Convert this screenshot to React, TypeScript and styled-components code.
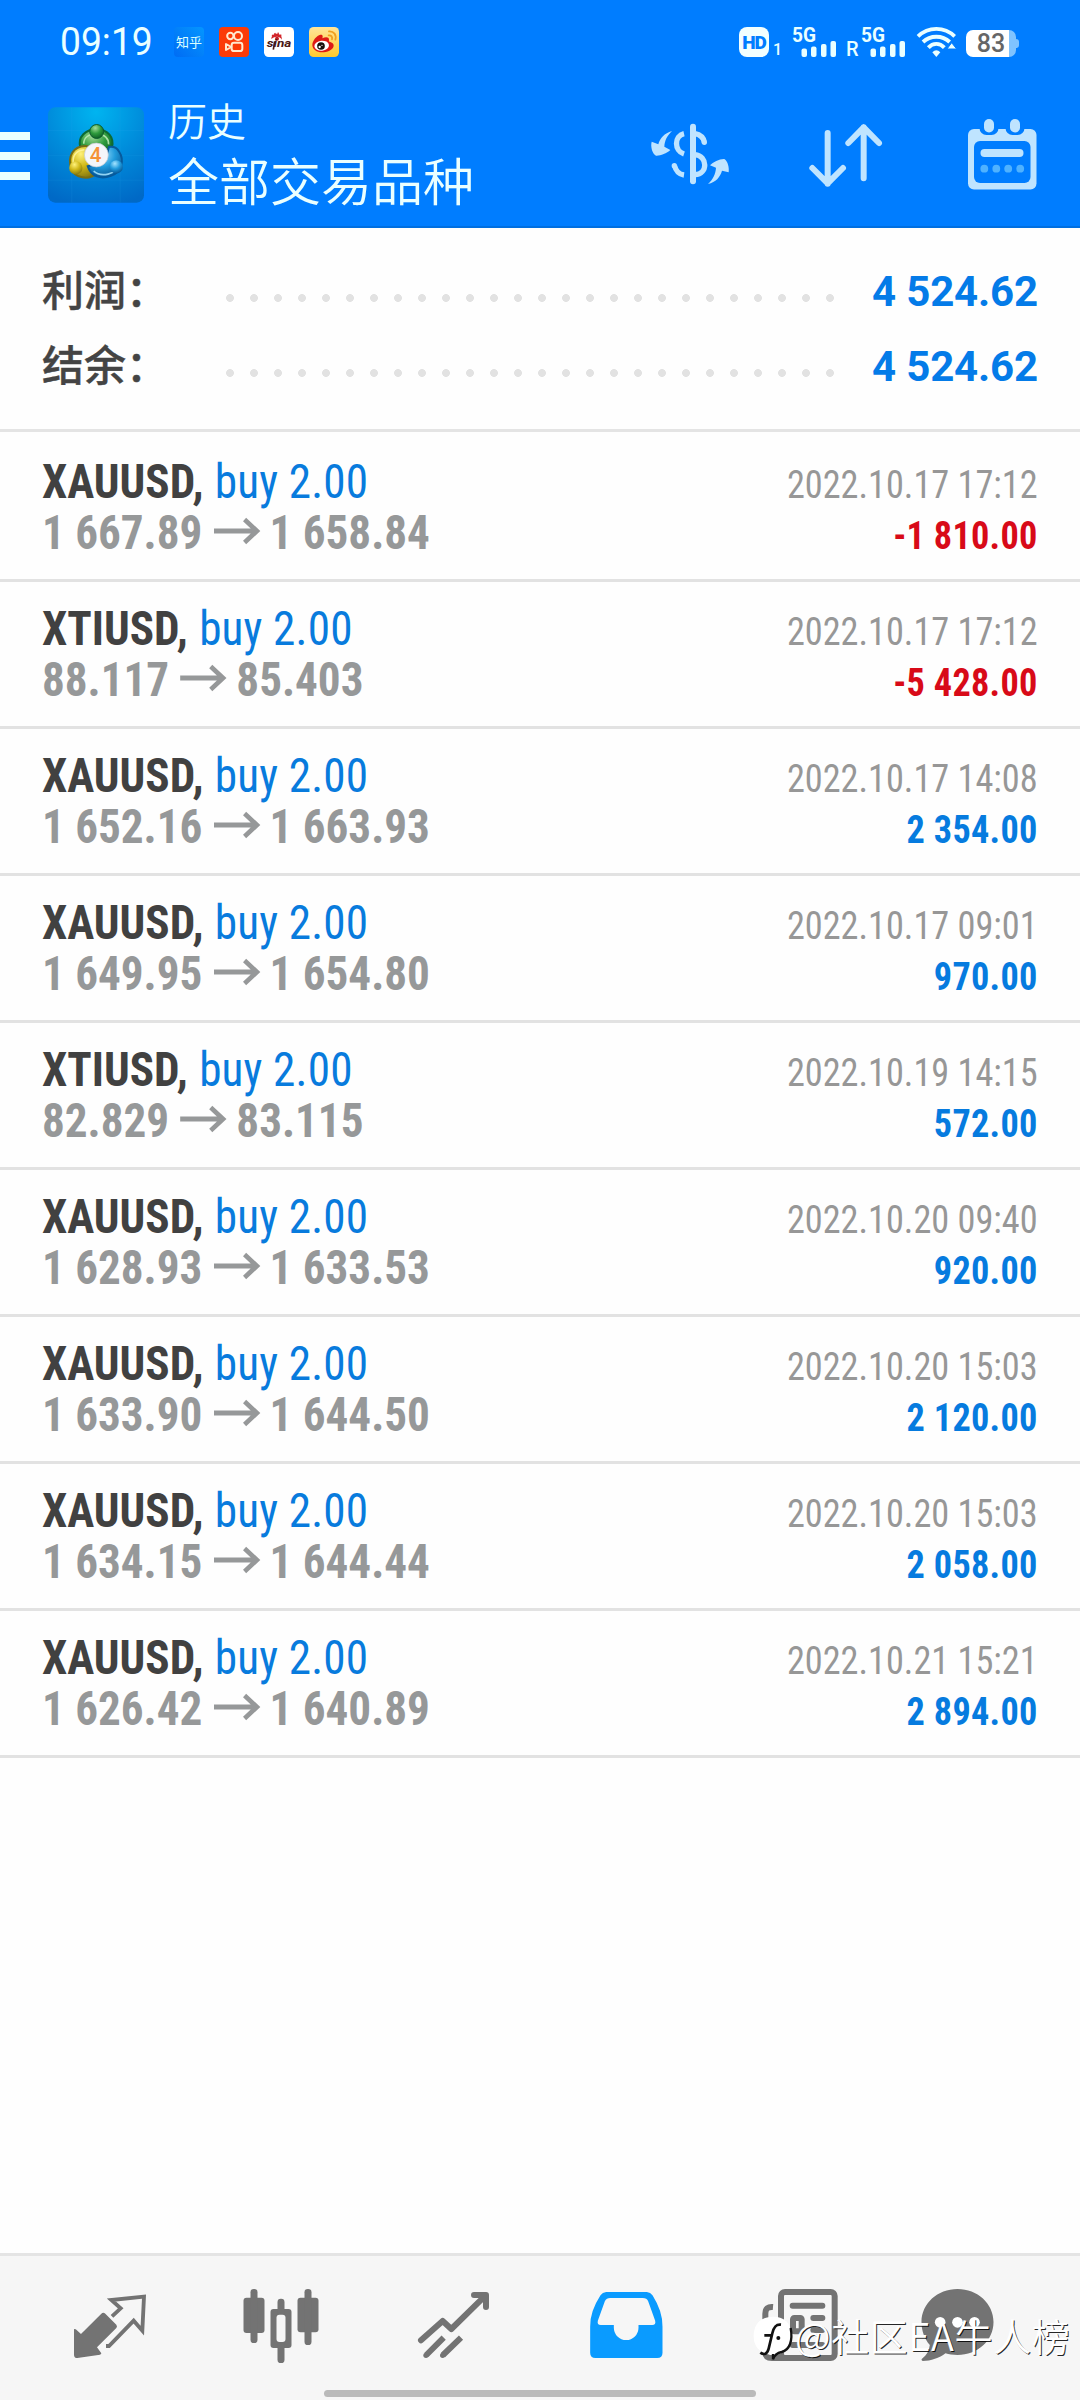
import React from "react";
import styled, { createGlobalStyle } from "styled-components";

const CONDENSED = '"Roboto Condensed", Roboto, "Noto Sans CJK SC", sans-serif';
const CJK = '"Noto Sans CJK SC", "Noto Sans", sans-serif';

const GlobalStyle = createGlobalStyle`
  * { box-sizing: border-box; }
  body { margin: 0; background: #fff; font-family: Roboto, "Noto Sans CJK SC", sans-serif; }
  svg { display: block; flex: none; overflow: visible; }
`;

const Screen = styled.div`
  position: relative;
  width: 1080px;
  height: 2400px;
  display: flex;
  flex-direction: column;
  background: #fefefe;
  overflow: hidden;
`;

const Header = styled.header`
  height: 228px;
  background: #007dff;
  border-bottom: 2px solid #006fe0;
  display: flex;
  flex-direction: column;
`;

const StatusBar = styled.div`
  height: 84px;
  display: flex;
  align-items: center;
  padding: 0 61px 0 60px;
`;

const Clock = styled.div`
  width: 114px;
  font-size: 39px;
  line-height: 40px;
  padding-top: 1px;
  color: #eaffff;
  transform: scaleX(0.955);
  transform-origin: left;
`;

const AppIcons = styled.div`
  display: flex;
  gap: 15px;
`;

const StatusIcons = styled.div`
  display: flex;
  align-items: flex-end;
  height: 30px;
  margin-left: auto;
`;

const Spaced = styled.div<{ $left: number }>`
  margin-left: ${(p) => p.$left}px;
`;

const Small = styled.span<{ $left: number; $size: number; $width: number }>`
  margin-left: ${(p) => p.$left}px;
  width: ${(p) => p.$width}px;
  font-size: ${(p) => p.$size}px;
  line-height: ${(p) => p.$size * 0.8}px;
  font-weight: 500;
  color: #eaffff;
`;

const HdBadge = styled.div`
  width: 30px;
  height: 30px;
  border-radius: 8px;
  background: #f2ffff;
  color: #007dff;
  font: 900 19px/31px Roboto, sans-serif;
  letter-spacing: -1px;
  text-align: center;
`;

const Battery = styled.div`
  width: 50px;
  height: 27px;
  border-radius: 7px;
  background: linear-gradient(90deg, #fff 0 43px, #7fc3ff 43px);
  color: #666;
  font: 500 25px/28px Roboto, sans-serif;
  text-align: center;
`;

const BatteryTip = styled.div`
  width: 3px;
  height: 9px;
  margin-bottom: 9px;
  border-radius: 0 3px 3px 0;
  background: #7fc3ff;
`;

const TitleBar = styled.div`
  height: 144px;
  display: flex;
  align-items: center;
  padding-right: 43px;
`;

const MenuButton = styled.div`
  width: 30px;
  height: 50px;
  margin: 4px 18px 0 0;
  display: flex;
  flex-direction: column;
  justify-content: space-between;
`;

const MenuLine = styled.div`
  height: 8px;
  margin-bottom: 2px;
  background: #eaffff;
`;

const Titles = styled.div`
  margin-left: 24px;
  padding-bottom: 3px;
  flex: 1;
  color: #eaffff;
  font-family: ${CJK};
  font-weight: 350;
`;

const Subtitle = styled.div`
  font-size: 39px;
  line-height: 52px;
`;

const Title = styled.div`
  font-size: 51px;
  line-height: 68px;
`;

const Actions = styled.div`
  display: flex;
  align-items: center;
`;

const Summary = styled.section`
  height: 204px;
  padding: 24px 42px 0;
  border-bottom: 3px solid #e4e4e4;
`;

const SummaryRow = styled.div`
  height: 75px;
  display: flex;
  align-items: center;
`;

const SummaryLabel = styled.div`
  width: 183px;
  padding-bottom: 4px;
  font: 500 42px/60px ${CJK};
  color: #444;
  -webkit-text-stroke: 0.4px #444;
`;

const Leader = styled.div`
  width: 624px;
  height: 24px;
  margin: 16px 0 0 -7px;
  background: radial-gradient(circle, #e2e2e2 3.6px, transparent 4.2px) 0 0 / 24px 24px;
`;

const SummaryValue = styled.div`
  margin-left: auto;
  padding-top: 4px;
  font: 700 42px/60px Roboto, sans-serif;
  letter-spacing: -0.15px;
  color: #047be8;
`;

const Deal = styled.article<{ $first?: boolean }>`
  height: ${(p) => (p.$first ? 150 : 147)}px;
  display: flex;
  justify-content: space-between;
  padding: ${(p) => (p.$first ? 24 : 21)}px 42px 0;
  border-bottom: 3px solid #e2e2e2;
  font-family: ${CONDENSED};
`;

const Details = styled.div`
  transform: scaleX(0.94);
  transform-origin: left;
  font-size: 48px;
`;

const Outcome = styled.div`
  padding-top: 4px;
  text-align: right;
  transform: scaleX(0.93);
  transform-origin: right;
  font-size: 39px;
`;

const Line = styled.div`
  height: 51px;
  display: flex;
  align-items: center;
  justify-content: flex-end;
  line-height: 51px;
  white-space: nowrap;
`;

const DetailLine = styled(Line)`
  justify-content: flex-start;
`;

const Symbol = styled.span`
  font-weight: 700;
  color: #414141;
`;

const Side = styled.span`
  margin-left: 12px;
  letter-spacing: 0.2px;
  color: #087bdd;
`;

const Price = styled.span`
  font-weight: 700;
  color: #969899;
`;

const ArrowSvg = styled.svg`
  margin: 0 10.5px 0 12px;
`;

const DateText = styled.span`
  color: #979797;
`;

const Profit = styled.span<{ $loss: boolean }>`
  font-weight: 700;
  letter-spacing: 0.3px;
  color: ${(p) => (p.$loss ? "#d80a18" : "#067bdf")};
`;

const BottomBar = styled.nav`
  margin-top: auto;
  height: 147px;
  border-top: 3px solid #e4e4e4;
  background: #f6f6f6;
  display: flex;
  flex-direction: column;
  align-items: center;
`;

const Tabs = styled.div`
  width: 100%;
  height: 134px;
  display: grid;
  grid-template-columns: repeat(6, 171.5px);
  justify-items: center;
  padding: 24px 0 0 24px;
`;

const HomeIndicator = styled.div`
  width: 432px;
  height: 7px;
  border-radius: 4px;
  background: #bababa;
`;

const Watermark = styled.div`
  position: absolute;
  left: 753px;
  top: 2309px;
  height: 56px;
  display: flex;
  align-items: center;
  color: #fff;
  white-space: nowrap;
`;

const WatermarkText = styled.span`
  margin-left: 2px;
  padding-bottom: 5px;
  font: 350 38px/52px ${CJK};
  letter-spacing: 0.6px;
  text-shadow: 1px 1px 0 rgba(0, 0, 0, 0.85);
`;

const ZhihuIcon = () => (
  <svg width="30" height="30" viewBox="0 0 30 30">
    <defs>
      <linearGradient id="zh" x1="1" y1="0" x2="0" y2="1">
        <stop offset="0" stopColor="#0496ff" />
        <stop offset="1" stopColor="#006cf4" />
      </linearGradient>
    </defs>
    <rect width="30" height="30" rx="4" fill="url(#zh)" />
    <text x="15" y="20" fontSize="13" textAnchor="middle" fill="#dcffff" fontFamily="Noto Sans CJK SC, sans-serif">知乎</text>
  </svg>
);

const KuaishouIcon = () => (
  <svg width="30" height="30" viewBox="0 0 90 90">
    <rect width="90" height="90" rx="12" fill="#fb3b08" />
    <g fill="none" stroke="#ffe9cf" strokeWidth="6">
      <circle cx="34" cy="27" r="9.5" />
      <circle cx="57" cy="27" r="12" />
      <rect x="38" y="47" width="32" height="25" rx="7" />
      <path d="M37 60L21 51v18z" strokeLinejoin="round" />
    </g>
  </svg>
);

const SinaIcon = () => (
  <svg width="30" height="30" viewBox="0 0 90 90">
    <rect width="90" height="90" rx="14" fill="#fff" />
    <path d="M22 36C22 25 30 19 40 20C50 21 55 29 53 38C50 31 45 29 39 29C31 29 26 32 22 36Z" fill="#d3262b" />
    <path d="M24 24l6 4M32 18l3 6M43 17l-1 6M52 23l-5 4" stroke="#d3262b" strokeWidth="4" />
    <circle cx="39" cy="35" r="6" fill="#c31e25" />
    <text x="45" y="61" textAnchor="middle" fontSize="31" fontWeight="700" fontStyle="italic" textLength="74" lengthAdjust="spacingAndGlyphs" fill="#4a1815" fontFamily="Roboto, sans-serif">sina</text>
    <path d="M32 43L28 68" stroke="#4a1815" strokeWidth="5" />
  </svg>
);

const WeiboIcon = () => (
  <svg width="30" height="30" viewBox="0 0 90 90">
    <defs>
      <linearGradient id="wb" x1="0" y1="0" x2="0" y2="1">
        <stop offset="0" stopColor="#ffe59a" />
        <stop offset="1" stopColor="#ffc92e" />
      </linearGradient>
    </defs>
    <rect width="90" height="90" rx="14" fill="url(#wb)" />
    <path d="M10 55C9 42 24 24 34 23C42 22 42 28 40 34C49 30 60 29 60 38C60 42 59 43 62 44C69 46 75 50 74 57C72 69 54 76 39 76C23 76 11 68 10 55Z" fill="#de1a16" />
    <ellipse cx="38" cy="56" rx="22" ry="15" fill="#fff" transform="rotate(-6 38 56)" />
    <circle cx="36" cy="57" r="11.5" fill="#17100d" />
    <circle cx="32" cy="60" r="3.5" fill="#fff" />
    <circle cx="39" cy="55" r="2" fill="#fff" />
    <path d="M60 13C75 12 83 24 79 38M59 25C67 24 71 30 69 37" fill="none" stroke="#f0a020" strokeWidth="5.5" strokeLinecap="round" />
  </svg>
);

const Signal = () => (
  <svg width="46" height="30" viewBox="0 0 46 30" fill="#eaffff">
    <text x="0" y="14.5" fontSize="20" fontWeight="700" textLength="24" lengthAdjust="spacingAndGlyphs" fontFamily="Roboto, sans-serif">5G</text>
    <rect x="9.5" y="21.5" width="5.5" height="8.5" rx="2" />
    <rect x="19" y="19.5" width="5.5" height="10.5" rx="2" />
    <rect x="29" y="17" width="5.5" height="13" rx="2" />
    <rect x="38.5" y="14" width="5.5" height="16" rx="2" />
  </svg>
);

const Wifi = () => (
  <svg width="40" height="30" viewBox="0 0 120 90" fill="none" stroke="#eaffff" strokeWidth="11.5">
    <path d="M3 28C34 -2 82 -2 113 28" />
    <path d="M18 45C40 24 76 24 98 45" />
    <path d="M34 62C48 47 68 47 82 62" />
    <path d="M46 76C54 68 62 68 70 76L58 90Z" fill="#eaffff" stroke="none" />
    <path d="M90 66L104 47L119 66Z" fill="#eaffff" stroke="#007dff" strokeWidth="3" />
  </svg>
);

const MetaTraderLogo = () => (
  <svg width="96" height="96" viewBox="0 0 290 288">
    <defs>
      <radialGradient id="bg" cx="0.5" cy="0.05" r="1">
        <stop offset="0" stopColor="#00b4f0" />
        <stop offset="0.5" stopColor="#008cdb" />
        <stop offset="1" stopColor="#0069c6" />
      </radialGradient>
      <radialGradient id="gr" cx="0.4" cy="0.25" r="0.8">
        <stop offset="0" stopColor="#a6dd9a" />
        <stop offset="0.5" stopColor="#2f9b3d" />
        <stop offset="1" stopColor="#0a5a22" />
      </radialGradient>
      <radialGradient id="ye" cx="0.4" cy="0.25" r="0.8">
        <stop offset="0" stopColor="#fff27a" />
        <stop offset="0.5" stopColor="#d0b818" />
        <stop offset="1" stopColor="#7f7410" />
      </radialGradient>
      <radialGradient id="bl" cx="0.4" cy="0.25" r="0.8">
        <stop offset="0" stopColor="#a5e4ff" />
        <stop offset="0.5" stopColor="#219bdc" />
        <stop offset="1" stopColor="#04508f" />
      </radialGradient>
    </defs>
    <rect width="290" height="288" rx="22" fill="url(#bg)" />
    <path d="M0 70H290M0 145H290M0 220H290M72 0V288M218 0V288" stroke="#29a8ee" strokeOpacity="0.14" strokeWidth="3" />
    <g strokeWidth="6">
      <path d="M98 122C88 88 115 66 147 66C180 66 202 92 193 122C190 138 180 147 168 152L118 152C106 145 100 136 98 122Z" fill="url(#gr)" stroke="#0d6b34" />
      <path d="M147 200C122 222 80 214 70 184C58 146 78 118 112 117C132 116 142 128 147 150Z" fill="url(#ye)" stroke="#766d16" />
      <path d="M120 178C130 210 160 218 190 207C222 196 232 160 215 134C208 122 196 118 184 120L172 165Z" fill="url(#bl)" stroke="#075a9c" />
    </g>
    <g fill="none" strokeOpacity="0.85" strokeWidth="5">
      <path d="M108 110C108 92 122 80 147 80C172 80 184 96 183 112" stroke="#c0efb8" />
      <path d="M78 178C70 148 84 130 110 128" stroke="#fff6a0" />
      <path d="M138 193C160 212 206 204 216 172" stroke="#a8e5ff" />
    </g>
    <circle cx="147" cy="73" r="21" fill="url(#gr)" stroke="#0b5a2c" strokeWidth="3" />
    <circle cx="84" cy="183" r="20" fill="url(#ye)" />
    <circle cx="206" cy="180" r="20" fill="url(#bl)" />
    <circle cx="146" cy="144" r="36" fill="#f4f6fa" stroke="#c5cad3" strokeWidth="2" />
    <text x="144" y="166" textAnchor="middle" fontSize="62" fontWeight="500" fill="#f59237" fontFamily="Roboto, sans-serif">4</text>
  </svg>
);

const CurrencyIcon = () => (
  <svg width="80" height="66" viewBox="30 36 240 198" fill="none" stroke="#bfe4ff" strokeWidth="16">
    <path d="M159 50V214" strokeWidth="18" strokeLinecap="round" />
    <path d="M132 71C102 78 102 122 132 132" />
    <path d="M104 168C107 182 118 193 132 195" />
    <circle cx="103" cy="167" r="8" fill="#bfe4ff" stroke="none" />
    <path d="M165 71C180 74 190 82 193 96" />
    <circle cx="193" cy="97" r="8" fill="#bfe4ff" stroke="none" />
    <path d="M165 134C204 138 204 192 165 194" />
    <path d="M96 63C73 70 60 84 55 103L35 95C31 110 37 131 48 137C60 138 80 130 91 120L73 110C74 91 82 76 96 63Z" fill="#bfe4ff" stroke="none" />
    <path d="M204 222C228 216 240 202 246 182L266 187C268 174 264 154 253 147C240 146 219 156 210 166L228 173C227 192 219 208 204 222Z" fill="#bfe4ff" stroke="none" />
  </svg>
);

const SortIcon = () => (
  <svg width="75" height="66" viewBox="505 36 225 198" fill="none" stroke="#bfe4ff" strokeWidth="18" strokeLinecap="round" strokeLinejoin="round">
    <path d="M564 69V221M518 174L564 220L610 174" />
    <path d="M672 205V52M626 99L672 52L718 99" />
  </svg>
);

const CalendarIcon = () => (
  <svg width="69" height="71" viewBox="0 0 69 71">
    <rect y="10" width="68.500" height="60.500" rx="6" fill="#bfe4ff" />
    <rect x="6" y="22" width="56.500" height="42" rx="6" fill="#007dff" />
    <rect x="11.500" y="-6" width="19" height="22" rx="7" fill="#007dff" />
    <rect x="37.500" y="-6" width="19" height="22" rx="7" fill="#007dff" />
    <rect x="16" y="0" width="10" height="13.500" rx="5" fill="#bfe4ff" />
    <rect x="42" y="0" width="10" height="13.500" rx="5" fill="#bfe4ff" />
    <rect x="12.500" y="30" width="43" height="8" rx="4" fill="#bfe4ff" />
    <g fill="#4fb2ff">
      <circle cx="16.300" cy="49.700" r="3.900" />
      <circle cx="28.300" cy="49.700" r="3.900" />
      <circle cx="40.200" cy="49.700" r="3.900" />
      <circle cx="52.200" cy="49.700" r="3.900" />
    </g>
  </svg>
);

const PriceArrow = () => (
  <ArrowSvg width="49" height="36" viewBox="0 0 49 36" fill="none" stroke="#969899" strokeWidth="5">
    <path d="M0 16H45M32.500 4.500L45.500 16L32.500 27.500" />
  </ArrowSvg>
);

const QuotesTab = () => (
  <svg width="90" height="90" viewBox="195 150 270 270">
    <path d="M304 251Q310 246 316 251L349 284Q353 289 349 294L291 352L304 370Q304 373 300 374L232 384Q222 384 222 374V298Q225 295 229 299L243 312Z" fill="#737373" />
    <path d="M336 259L362 235L334 210L432 200L427 302L401 272L327 348H318" fill="none" stroke="#737373" strokeWidth="11.5" />
  </svg>
);

const ChartTab = () => (
  <svg width="90" height="90" viewBox="709.500 150 270 270" fill="#737373">
    <rect x="732" y="203" width="63" height="106" rx="9" />
    <rect x="753" y="177" width="21" height="162" rx="10" />
    <rect x="894" y="203" width="63" height="104" rx="9" />
    <rect x="915" y="177" width="21" height="168" rx="10" />
    <rect x="813" y="237" width="63" height="117" rx="9" />
    <rect x="834" y="206" width="21" height="193" rx="10" />
    <rect x="831" y="254" width="27" height="82" rx="9" fill="#f6f6f6" />
  </svg>
);

const TradeTab = () => (
  <svg width="90" height="90" viewBox="144 150 270 270" fill="none" stroke="#737373" strokeWidth="18" strokeLinejoin="round">
    <path d="M183 331L248 273L274 297L376 197" strokeLinecap="round" />
    <path d="M342 195H378V231" strokeLinecap="round" />
    <path d="M199 375L251 323M249 375L303 323" />
    <circle cx="198" cy="376" r="8" fill="#737373" stroke="none" />
    <circle cx="248" cy="376" r="8" fill="#737373" stroke="none" />
  </svg>
);

const HistoryTab = () => (
  <svg width="90" height="90" viewBox="657.500 150 270 270">
    <path d="M739 186H861Q872 187 878 196Q909 245 908 290V368Q908 384 892 384H707Q691 384 691 368V290Q690 245 722 196Q728 187 739 186Z" fill="#0a9bff" />
    <path d="M751 204H849Q861 204 865 214L886 272Q889 285 877 285H836V293A37 37 0 0 1 762 293V285H723Q711 285 714 272L735 214Q740 204 751 204Z" fill="#f6f6f6" />
  </svg>
);

const NewsTab = () => (
  <svg width="90" height="90" viewBox="93 150 270 270" fill="none" stroke="#737373" strokeWidth="18">
    <path d="M159 231Q136 229 136 251V365Q136 384 156 384H200" />
    <rect x="183" y="186" width="161" height="198" rx="12" />
    <path d="M218 227H307M280 264H307M280 300H307M218 345H307" strokeLinecap="round" />
    <rect x="219" y="264" width="26" height="40" rx="4" />
  </svg>
);

const ChatTab = () => (
  <svg width="90" height="90" viewBox="607.500 150 270 270">
    <path d="M714 177C774 177 822 221 822 276C822 332 774 375 714 375C700 375 688 373 678 370C660 384 634 393 610 393C605 392 605 388 609 385C621 376 629 362 631 345C615 327 606 302 606 276C606 221 654 177 714 177Z" fill="#737373" />
    <circle cx="662" cy="277" r="16" fill="#fff" />
    <circle cx="714" cy="277" r="16" fill="#fff" />
    <circle cx="765" cy="277" r="16" fill="#fff" />
  </svg>
);

const WatermarkLogo = () => (
  <svg width="40" height="46" viewBox="0 0 120 138">
    <path d="M60 8C96 8 114 28 114 62C114 96 106 116 60 124C20 118 2 98 2 66C2 30 24 8 60 8Z" fill="#fff" />
    <path d="M84 32C68 30 62 40 58 58L47 104C43 120 33 124 22 116M34 64H56" fill="none" stroke="#111" strokeWidth="8" />
    <path d="M113 42C120 80 110 108 86 114C70 117 64 124 60 136L60 120" fill="none" stroke="#111" strokeWidth="7" />
    <circle cx="76" cy="72" r="6" fill="#111" />
  </svg>
);

type DealData = { symbol: string; open: string; close: string; time: string; profit: string };

const deals: DealData[] = [
  { symbol: "XAUUSD", open: "1 667.89", close: "1 658.84", time: "2022.10.17 17:12", profit: "-1 810.00" },
  { symbol: "XTIUSD", open: "88.117", close: "85.403", time: "2022.10.17 17:12", profit: "-5 428.00" },
  { symbol: "XAUUSD", open: "1 652.16", close: "1 663.93", time: "2022.10.17 14:08", profit: "2 354.00" },
  { symbol: "XAUUSD", open: "1 649.95", close: "1 654.80", time: "2022.10.17 09:01", profit: "970.00" },
  { symbol: "XTIUSD", open: "82.829", close: "83.115", time: "2022.10.19 14:15", profit: "572.00" },
  { symbol: "XAUUSD", open: "1 628.93", close: "1 633.53", time: "2022.10.20 09:40", profit: "920.00" },
  { symbol: "XAUUSD", open: "1 633.90", close: "1 644.50", time: "2022.10.20 15:03", profit: "2 120.00" },
  { symbol: "XAUUSD", open: "1 634.15", close: "1 644.44", time: "2022.10.20 15:03", profit: "2 058.00" },
  { symbol: "XAUUSD", open: "1 626.42", close: "1 640.89", time: "2022.10.21 15:21", profit: "2 894.00" },
];

const totals = [
  { label: "利润：", value: "4 524.62" },
  { label: "结余：", value: "4 524.62" },
];

export default function App() {
  return (
    <Screen>
      <GlobalStyle />
      <Header>
        <StatusBar>
          <Clock>09:19</Clock>
          <AppIcons>
            <ZhihuIcon />
            <KuaishouIcon />
            <SinaIcon />
            <WeiboIcon />
          </AppIcons>
          <StatusIcons>
            <HdBadge>HD</HdBadge>
            <Small $left={4} $size={16} $width={10}>1</Small>
            <Spaced $left={9}><Signal /></Spaced>
            <Small $left={8} $size={20} $width={13}>R</Small>
            <Spaced $left={2}><Signal /></Spaced>
            <Spaced $left={10}><Wifi /></Spaced>
            <Spaced $left={9}><Battery>83</Battery></Spaced>
            <BatteryTip />
          </StatusIcons>
        </StatusBar>
        <TitleBar>
          <MenuButton>
            <MenuLine />
            <MenuLine />
            <MenuLine />
          </MenuButton>
          <MetaTraderLogo />
          <Titles>
            <Subtitle>历史</Subtitle>
            <Title>全部交易品种</Title>
          </Titles>
          <Actions>
            <CurrencyIcon />
            <Spaced $left={78}><SortIcon /></Spaced>
            <Spaced $left={85}><CalendarIcon /></Spaced>
          </Actions>
        </TitleBar>
      </Header>

      <Summary>
        {totals.map((t) => (
          <SummaryRow key={t.label}>
            <SummaryLabel>{t.label}</SummaryLabel>
            <Leader />
            <SummaryValue>{t.value}</SummaryValue>
          </SummaryRow>
        ))}
      </Summary>

      {deals.map((d, i) => (
        <Deal key={i} $first={i === 0}>
          <Details>
            <DetailLine>
              <Symbol>{d.symbol},</Symbol>
              <Side>buy 2.00</Side>
            </DetailLine>
            <DetailLine>
              <Price>{d.open}</Price>
              <PriceArrow />
              <Price>{d.close}</Price>
            </DetailLine>
          </Details>
          <Outcome>
            <Line>
              <DateText>{d.time}</DateText>
            </Line>
            <Line>
              <Profit $loss={d.profit.startsWith("-")}>{d.profit}</Profit>
            </Line>
          </Outcome>
        </Deal>
      ))}

      <BottomBar>
        <Tabs>
          <QuotesTab />
          <ChartTab />
          <TradeTab />
          <HistoryTab />
          <NewsTab />
          <ChatTab />
        </Tabs>
        <HomeIndicator />
      </BottomBar>

      <Watermark>
        <WatermarkLogo />
        <WatermarkText>@社区EA牛人榜</WatermarkText>
      </Watermark>
    </Screen>
  );
}
